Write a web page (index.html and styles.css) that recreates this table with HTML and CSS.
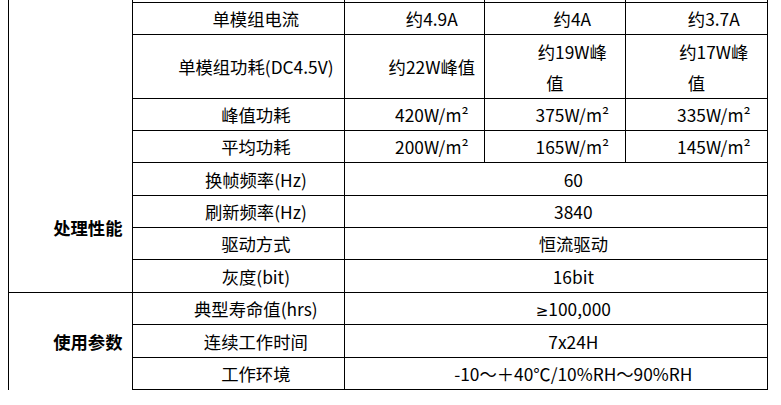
FILE: index.html
```html
<!DOCTYPE html>
<html lang="zh-CN">
<head>
<meta charset="utf-8">
<title>参数表</title>
<link rel="stylesheet" href="styles.css">
</head>
<body>
<table class="spec">
  <colgroup>
    <col class="c-group">
    <col class="c-name">
    <col class="c-v1">
    <col class="c-v2">
    <col class="c-v3">
  </colgroup>
  <tbody>
    <tr class="r-cut">
      <td class="group open-bottom" rowspan="5"></td>
      <td></td><td></td><td></td><td></td>
    </tr>
    <tr class="r32">
      <td>单模组电流</td>
      <td>约4.9A</td>
      <td>约4A</td>
      <td>约3.7A</td>
    </tr>
    <tr class="r64">
      <td>单模组功耗(DC4.5V)</td>
      <td>约22W峰值</td>
      <td>约19W峰<br>值</td>
      <td>约17W峰<br>值</td>
    </tr>
    <tr class="r32">
      <td>峰值功耗</td>
      <td>420W/m²</td>
      <td>375W/m²</td>
      <td>335W/m²</td>
    </tr>
    <tr class="r32">
      <td>平均功耗</td>
      <td>200W/m²</td>
      <td>165W/m²</td>
      <td>145W/m²</td>
    </tr>
    <tr class="r33">
      <td class="group open-top" rowspan="4">处理性能</td>
      <td>换帧频率(Hz)</td>
      <td colspan="3">60</td>
    </tr>
    <tr class="r32">
      <td>刷新频率(Hz)</td>
      <td colspan="3">3840</td>
    </tr>
    <tr class="r32">
      <td>驱动方式</td>
      <td colspan="3">恒流驱动</td>
    </tr>
    <tr class="r33">
      <td>灰度(bit)</td>
      <td colspan="3">16bit</td>
    </tr>
    <tr class="r32">
      <td class="group open-bottom" rowspan="3">使用参数</td>
      <td>典型寿命值(hrs)</td>
      <td colspan="3"><span class="sym">≥</span>100,000</td>
    </tr>
    <tr class="r33">
      <td>连续工作时间</td>
      <td colspan="3">7x24H</td>
    </tr>
    <tr class="r31">
      <td>工作环境</td>
      <td colspan="3">-10～＋40℃/10%RH～90%RH</td>
    </tr>
  </tbody>
</table>
</body>
</html>
```

FILE: styles.css
```css
html, body {
  margin: 0;
  padding: 0;
  background: #ffffff;
}

body {
  font-family: "Noto Sans CJK SC", sans-serif;
  font-size: 17.33px;
  color: #000000;
}

.spec {
  border-collapse: collapse;
  table-layout: fixed;
  width: 759px;
  margin: -30px 0 0 8px;
}

.c-group { width: 124px; }
.c-name { width: 212px; }
.c-v1 { width: 140px; }
.c-v2 { width: 141px; }
.c-v3 { width: 142px; }

.spec td {
  border: 1px solid #000000;
  padding: 0 6px;
  text-align: center;
  vertical-align: middle;
  text-indent: 2em;
  line-height: 31px;
  white-space: nowrap;
}

.spec td.group {
  font-weight: bold;
}

.spec td.open-bottom {
  border-bottom: none;
}

.spec td.open-top {
  border-top: none;
}

.sym {
  font-family: "DejaVu Sans", sans-serif;
  font-size: 15px;
  line-height: 1;
}

.r-cut { height: 32px; }
.r31 { height: 31px; }
.r32 { height: 32px; }
.r33 { height: 33px; }
.r64 { height: 64px; }
```
